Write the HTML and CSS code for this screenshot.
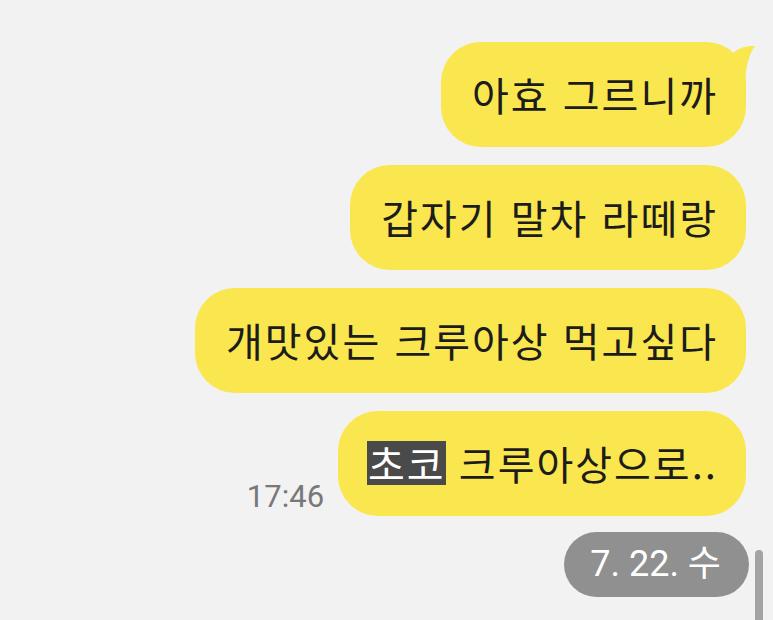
FILE: index.html
```html
<!DOCTYPE html>
<html lang="ko">
<head>
    <meta charset="utf-8">
    <title>채팅</title>
    <link rel="stylesheet" href="styles.css">
</head>
<body>
    <div class="chat">
        <div class="row">
            <div class="bubble first">
                아효 그르니까
                <svg class="tail" width="40" height="50" viewBox="0 0 40 50">
                    <path d="M17 11 C24 5 31 4 39 4 C33 12 29 26 29 45 L10 45 Z" fill="#fae64e"/>
                </svg>
            </div>
        </div>
        <div class="row">
            <div class="bubble">갑자기 말차 라떼랑</div>
        </div>
        <div class="row">
            <div class="bubble">개맛있는 크루아상 먹고싶다</div>
        </div>
        <div class="row">
            <span class="time">17:46</span>
            <div class="bubble"><span class="mark">초코</span> 크루아상으로..</div>
        </div>
        <div class="row date-row">
            <div class="date">7. 22. 수</div>
        </div>
    </div>
    <div class="scrollbar"></div>
</body>
</html>
```

FILE: styles.css
```css
body {
    margin: 0;
    background-color: #f2f2f2;
    font-family: Roboto, "Noto Sans CJK KR", sans-serif;
    overflow: hidden;
}
.chat {
    display: flex;
    flex-direction: column;
    gap: 18px;
    padding: 42px 27px 0 0;
}
.row {
    display: flex;
    justify-content: flex-end;
    align-items: flex-end;
    gap: 14px;
}
.bubble {
    position: relative;
    background-color: #fae64e;
    color: #1c1c1c;
    font-family: "Noto Sans CJK KR", sans-serif;
    font-size: 40px;
    line-height: 57px;
    letter-spacing: 2px;
    padding: 24px 28px 24px 31px;
    border-radius: 40px;
    white-space: nowrap;
}
.tail {
    position: absolute;
    top: 0;
    right: -10px;
}
.mark {
    display: inline-block;
    line-height: 44px;
    background-color: #4a4a4a;
    color: #ffffff;
    margin-left: -2px;
    padding-left: 1px;
}
.time {
    font-size: 31px;
    line-height: 31px;
    color: #787878;
    margin-bottom: 4px;
}
.date-row {
    margin-top: -2px;
    margin-right: -3px;
}
.date {
    background-color: #909090;
    color: #ffffff;
    font-size: 36px;
    line-height: 65px;
    padding: 0 28px 0 26px;
    border-radius: 33px;
}
.scrollbar {
    position: absolute;
    left: 755px;
    top: 550px;
    width: 8px;
    height: 80px;
    background-color: #a3a3a3;
    border-radius: 4px;
}
```
